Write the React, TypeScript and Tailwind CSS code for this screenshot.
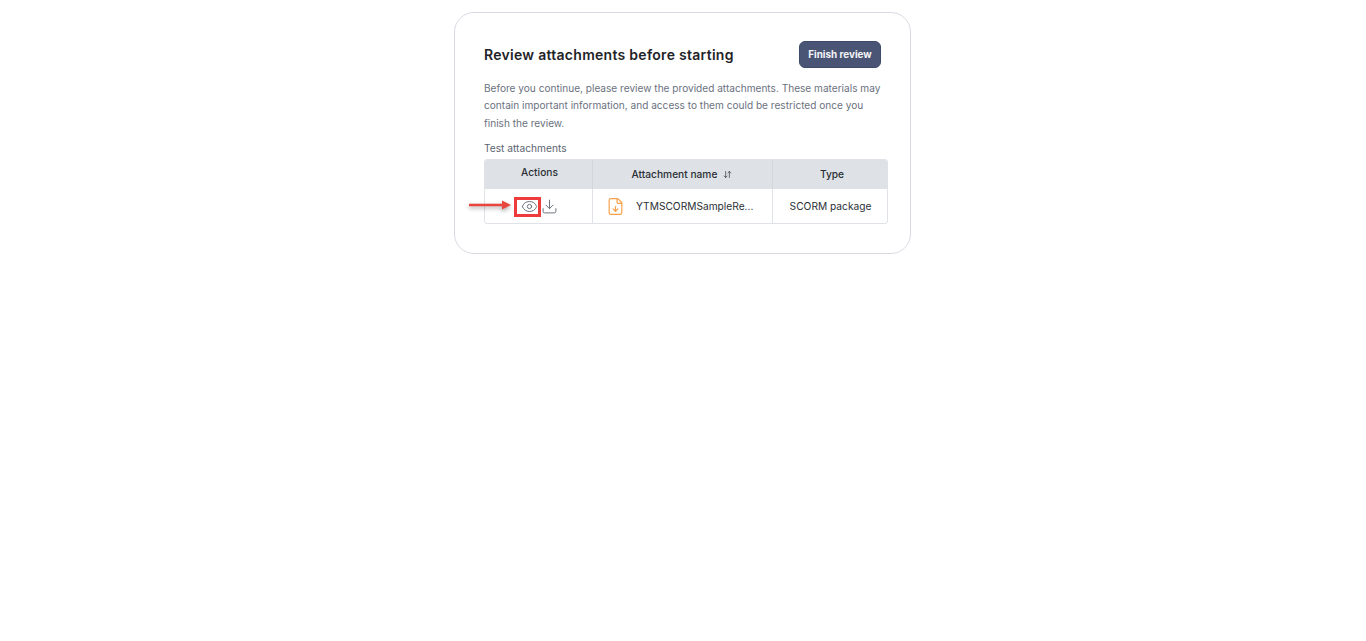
import { Eye, Download, FileDown, ArrowDownUp } from "lucide-react";

export default function App() {
  return (
    <div className="min-h-[641px] bg-white pt-3 pr-px font-['Inter',sans-serif]">
      <div className="mx-auto w-[457px] rounded-[20px] border border-[#d8dce2] bg-white pt-[28px] pr-[22px] pb-[29px] pl-[29px]">
        <div className="flex items-center justify-between pr-[7px]">
          <h2 className="text-[14px] leading-[22px] font-semibold tracking-[0.28px] text-[#1f2328]">
            Review attachments before starting
          </h2>
          <button className="h-[27px] w-[82px] rounded-[6px] border border-[#3f4a6b] bg-[#4a5474] text-[9.9px] font-bold text-[#f4f5f8]">
            Finish review
          </button>
        </div>

        <p className="mt-[11.5px] text-[10.1px] leading-[17.7px] text-[#6b7280]">
          Before you continue, please review the provided attachments. These
          materials may contain important information, and access to them could
          be restricted once you finish the review.
        </p>

        <div className="mt-[6.4px] text-[10.2px] leading-[18px] text-[#5b6470]">
          Test attachments
        </div>

        <div className="mt-[2px] grid grid-cols-[108px_180px_1fr] rounded-[3px] border border-[#dfe2e6] text-[10.2px] text-[#2a2f36]">
          <div className="flex h-[29px] justify-center rounded-tl-[2px] border-r border-[#d3d7dc] bg-[#dee1e5] pt-[5px] pl-[2px] font-medium">
            Actions
          </div>
          <div className="flex h-[29px] items-center justify-center gap-[6px] border-r border-[#d3d7dc] bg-[#dee1e5] pr-px font-medium">
            Attachment name
            <ArrowDownUp size={9} strokeWidth={1.75} />
          </div>
          <div className="flex h-[29px] items-center justify-center rounded-tr-[2px] bg-[#dee1e5] pl-[4px] font-medium">
            Type
          </div>

          <div className="relative flex h-[34px] items-center justify-center gap-[3px] border-r border-[#dfe2e6] pt-[1px] pl-[2px]">
            <Eye size={17} strokeWidth={1.25} className="text-[#5a6370]" />
            <Download size={17} strokeWidth={1.25} className="text-[#5a6370]" />
            <span className="absolute top-[8px] left-[29px] h-[20px] w-[27px] border-[3px] border-[#ee3b3b]" />
            <svg
              className="absolute top-[10px] left-[-16px] drop-shadow-[0_2px_2px_rgba(0,0,0,0.35)]"
              width="44"
              height="12"
              viewBox="0 0 44 12"
            >
              <path d="M0 6H34" stroke="#e8453c" strokeWidth="2.4" />
              <path d="M33 1.5L42 6L33 10.5Z" fill="#e8453c" />
            </svg>
          </div>
          <div className="flex h-[34px] items-center gap-[11px] border-r border-[#dfe2e6] pt-[1px] pl-[13px]">
            <FileDown size={19} strokeWidth={1.5} className="text-[#f7a14b]" />
            <span>YTMSCORMSampleRe...</span>
          </div>
          <div className="flex h-[34px] items-center justify-center pt-[1px] pl-px">
            SCORM package
          </div>
        </div>
      </div>
    </div>
  );
}
